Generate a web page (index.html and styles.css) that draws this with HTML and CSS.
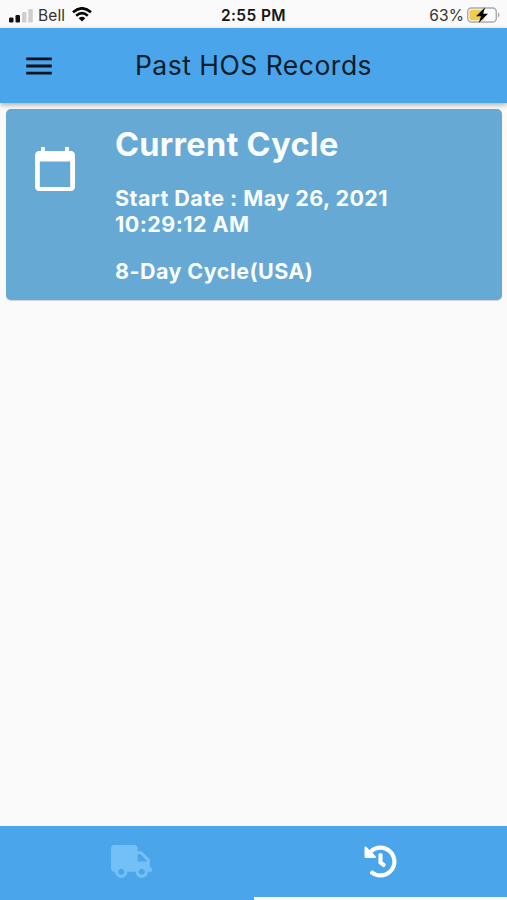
FILE: index.html
```html
<!DOCTYPE html>
<html lang="en">
<head>
<meta charset="utf-8">
<title>Past HOS Records</title>
<link rel="stylesheet" href="styles.css">
</head>
<body>
<div class="app">
  <div class="status">
    <div class="status-left">
      <svg class="signal" viewBox="0 0 24 14"><rect x="0" y="8.5" width="4.5" height="5" rx="1.2"/><rect x="6.5" y="6" width="4.5" height="7.5" rx="1.2"/><rect class="dim" x="13" y="3" width="4.5" height="10.5" rx="1.2"/><rect class="dim" x="19.3" y="0" width="4.5" height="13.5" rx="1.2"/></svg>
      <span class="carrier">Bell</span>
      <svg class="wifi" viewBox="0 0 20 15"><path d="M1 5.3Q10-2.7 19 5.3M4.2 8.7Q10 3.6 15.8 8.7"/><path class="dot" d="M6.7 11.2Q10 8.4 13.3 11.2L10 14.6Z"/></svg>
    </div>
    <span class="time">2:55 PM</span>
    <div class="status-right">
      <span class="percent">63%</span>
      <svg class="battery" viewBox="0 0 33 18"><rect class="case" x=".7" y="2" width="28.6" height="14" rx="3.8"/><path class="tip" d="M31 6.5c2 .8 2 4.2 0 5Z"/><path class="level" d="M5 3.7h12v10.6H5Q2.4 14.3 2.4 11.7V6.3Q2.4 3.7 5 3.7Z"/><path class="bolt" d="M18.2 1.2L9 10.2h5L11.7 17 21 7.8h-5Z"/></svg>
    </div>
  </div>
  <header class="bar">
    <svg class="menu" viewBox="0 0 24 24"><path d="M3 18h18v-2H3v2zm0-5h18v-2H3v2zm0-7v2h18V6H3z"/></svg>
    <h1 class="title">Past HOS Records</h1>
  </header>
  <main class="content">
    <article class="card">
      <svg class="calendar" viewBox="0 0 24 24"><path d="M20 3h-1V1h-2v2H7V1H5v2H4c-1.1 0-2 .9-2 2v16c0 1.1.9 2 2 2h16c1.1 0 2-.9 2-2V5c0-1.1-.9-2-2-2zm-.4 18H4.4V8.2h15.2V21z"/></svg>
      <div class="details">
        <h2 class="heading">Current Cycle</h2>
        <p class="line date">Start Date : May 26, 2021<br>10:29:12 AM</p>
        <p class="line cycle">8-Day Cycle(USA)</p>
      </div>
    </article>
  </main>
  <nav class="tabs">
    <div class="tab">
      <svg class="truck" viewBox="0 0 640 512"><path d="M624 352h-16V243.900c0-12.700-5.100-24.900-14.100-33.900L494 110.100c-9-9-21.200-14.100-33.900-14.100H416V48c0-26.500-21.500-48-48-48H48C21.500 0 0 21.500 0 48v320c0 26.500 21.500 48 48 48h16c0 53 43 96 96 96s96-43 96-96h128c0 53 43 96 96 96s96-43 96-96h48c8.800 0 16-7.200 16-16v-32c0-8.800-7.200-16-16-16zM160 464c-26.500 0-48-21.500-48-48s21.500-48 48-48 48 21.500 48 48-21.500 48-48 48zm320 0c-26.500 0-48-21.500-48-48s21.500-48 48-48 48 21.500 48 48-21.500 48-48 48zm80-208H416V144h44.100l99.900 99.900V256z"/></svg>
    </div>
    <div class="tab active">
      <svg class="history" viewBox="0 0 512 512"><path d="M504 255.531c.253 136.640-111.180 248.372-247.820 248.468-59.015.042-113.223-20.530-155.822-54.911-11.077-8.940-11.905-25.541-1.839-35.607l11.267-11.267c8.609-8.609 22.353-9.551 31.891-1.984C173.062 425.135 212.781 440 256 440c101.705 0 184-82.311 184-184 0-101.705-82.311-184-184-184-48.814 0-93.149 18.969-126.068 49.932l50.754 50.754c10.080 10.080 2.941 27.314-11.313 27.314H24c-8.837 0-16-7.163-16-16V38.627c0-14.254 17.234-21.393 27.314-11.314l49.372 49.372C129.209 34.136 189.552 8 256 8c136.810 0 247.747 110.780 248 247.531zm-180.912 78.784l9.823-12.630c8.138-10.463 6.253-25.542-4.210-33.679L288 256.349V152c0-13.255-10.745-24-24-24h-16c-13.255 0-24 10.745-24 24v135.651l65.409 50.874c10.463 8.137 25.541 6.253 33.679-4.210z"/></svg>
    </div>
  </nav>
</div>
</body>
</html>
```
FILE: styles.css
```css
* { box-sizing: border-box; }
body { margin: 0; font-family: Inter, "Liberation Sans", sans-serif; }
h1, h2, p { margin: 0; }
svg { display: block; flex: none; }
.app { height: 900px; display: flex; flex-direction: column; background: #fafafa; }
.status { height: 28px; flex: none; display: grid; grid-template-columns: 1fr auto 1fr; align-items: center; padding: 3px 7px 0 9px; color: #161616; font-size: 15.5px; line-height: 25px; }
.status-left, .status-right { display: flex; align-items: center; }
.status-right { justify-content: flex-end; }
.signal { width: 24px; height: 14px; fill: #111; }
.signal .dim { fill: #cfcfcf; }
.carrier { margin-left: 5px; width: 34px; letter-spacing: .1px; color: #333; }
.wifi { width: 20px; height: 15px; margin-top: -2px; fill: none; stroke: #050505; stroke-width: 2.6; }
.wifi .dot { fill: #050505; stroke: none; }
.time { font-weight: 600; font-size: 15.5px; letter-spacing: .4px; margin-right: 2px; }
.percent { color: #333; margin-right: 3px; letter-spacing: .1px; }
.battery { width: 33px; height: 18px; margin-top: -2px; }
.case { fill: none; stroke: #aaa; stroke-width: 1.4; }
.tip { fill: #aaa; }
.level { fill: #f2cb4c; }
.bolt { fill: #050505; }
.bar { height: 75px; flex: none; display: grid; grid-template-columns: 57px 1fr 57px; align-items: center; background: #4ba5eb; box-shadow: 0 2px 5px rgba(0,0,0,.3); z-index: 1; }
.menu { width: 34px; height: 34px; margin-left: 22px; fill: #06131d; }
.title { padding-bottom: 2px; text-align: center; font-size: 26.5px; line-height: 34px; font-weight: 400; letter-spacing: .5px; color: #091d2b; }
.content { flex: 1; padding: 6px 5px 0 6px; }
.card { height: 191px; display: flex; border-radius: 5px; background: #66a9d5; color: #fafdff; box-shadow: 0 1px 1px rgba(0,0,0,.16); }
.calendar { width: 48px; height: 48px; margin: 35.5px 0 0 25px; fill: #fff; }
.details { margin-left: 36px; padding-top: 15px; }
.heading { font-size: 32.5px; line-height: 42px; font-weight: 700; letter-spacing: .28px; }
.line { font-size: 21.5px; line-height: 26px; font-weight: 700; letter-spacing: .44px; white-space: nowrap; }
.date { margin-top: 19px; }
.cycle { margin-top: 21px; }
.tabs { height: 74px; flex: none; display: grid; grid-template-columns: 1fr 1fr; background: #4ba5eb; }
.tab { display: flex; justify-content: center; padding-top: 19px; border-bottom: 3px solid transparent; }
.active { border-color: #fafafa; }
.truck { width: 41px; height: 33px; margin-left: 9px; fill: #72c0f5; }
.history { width: 33px; height: 33px; fill: #fff; }
```
